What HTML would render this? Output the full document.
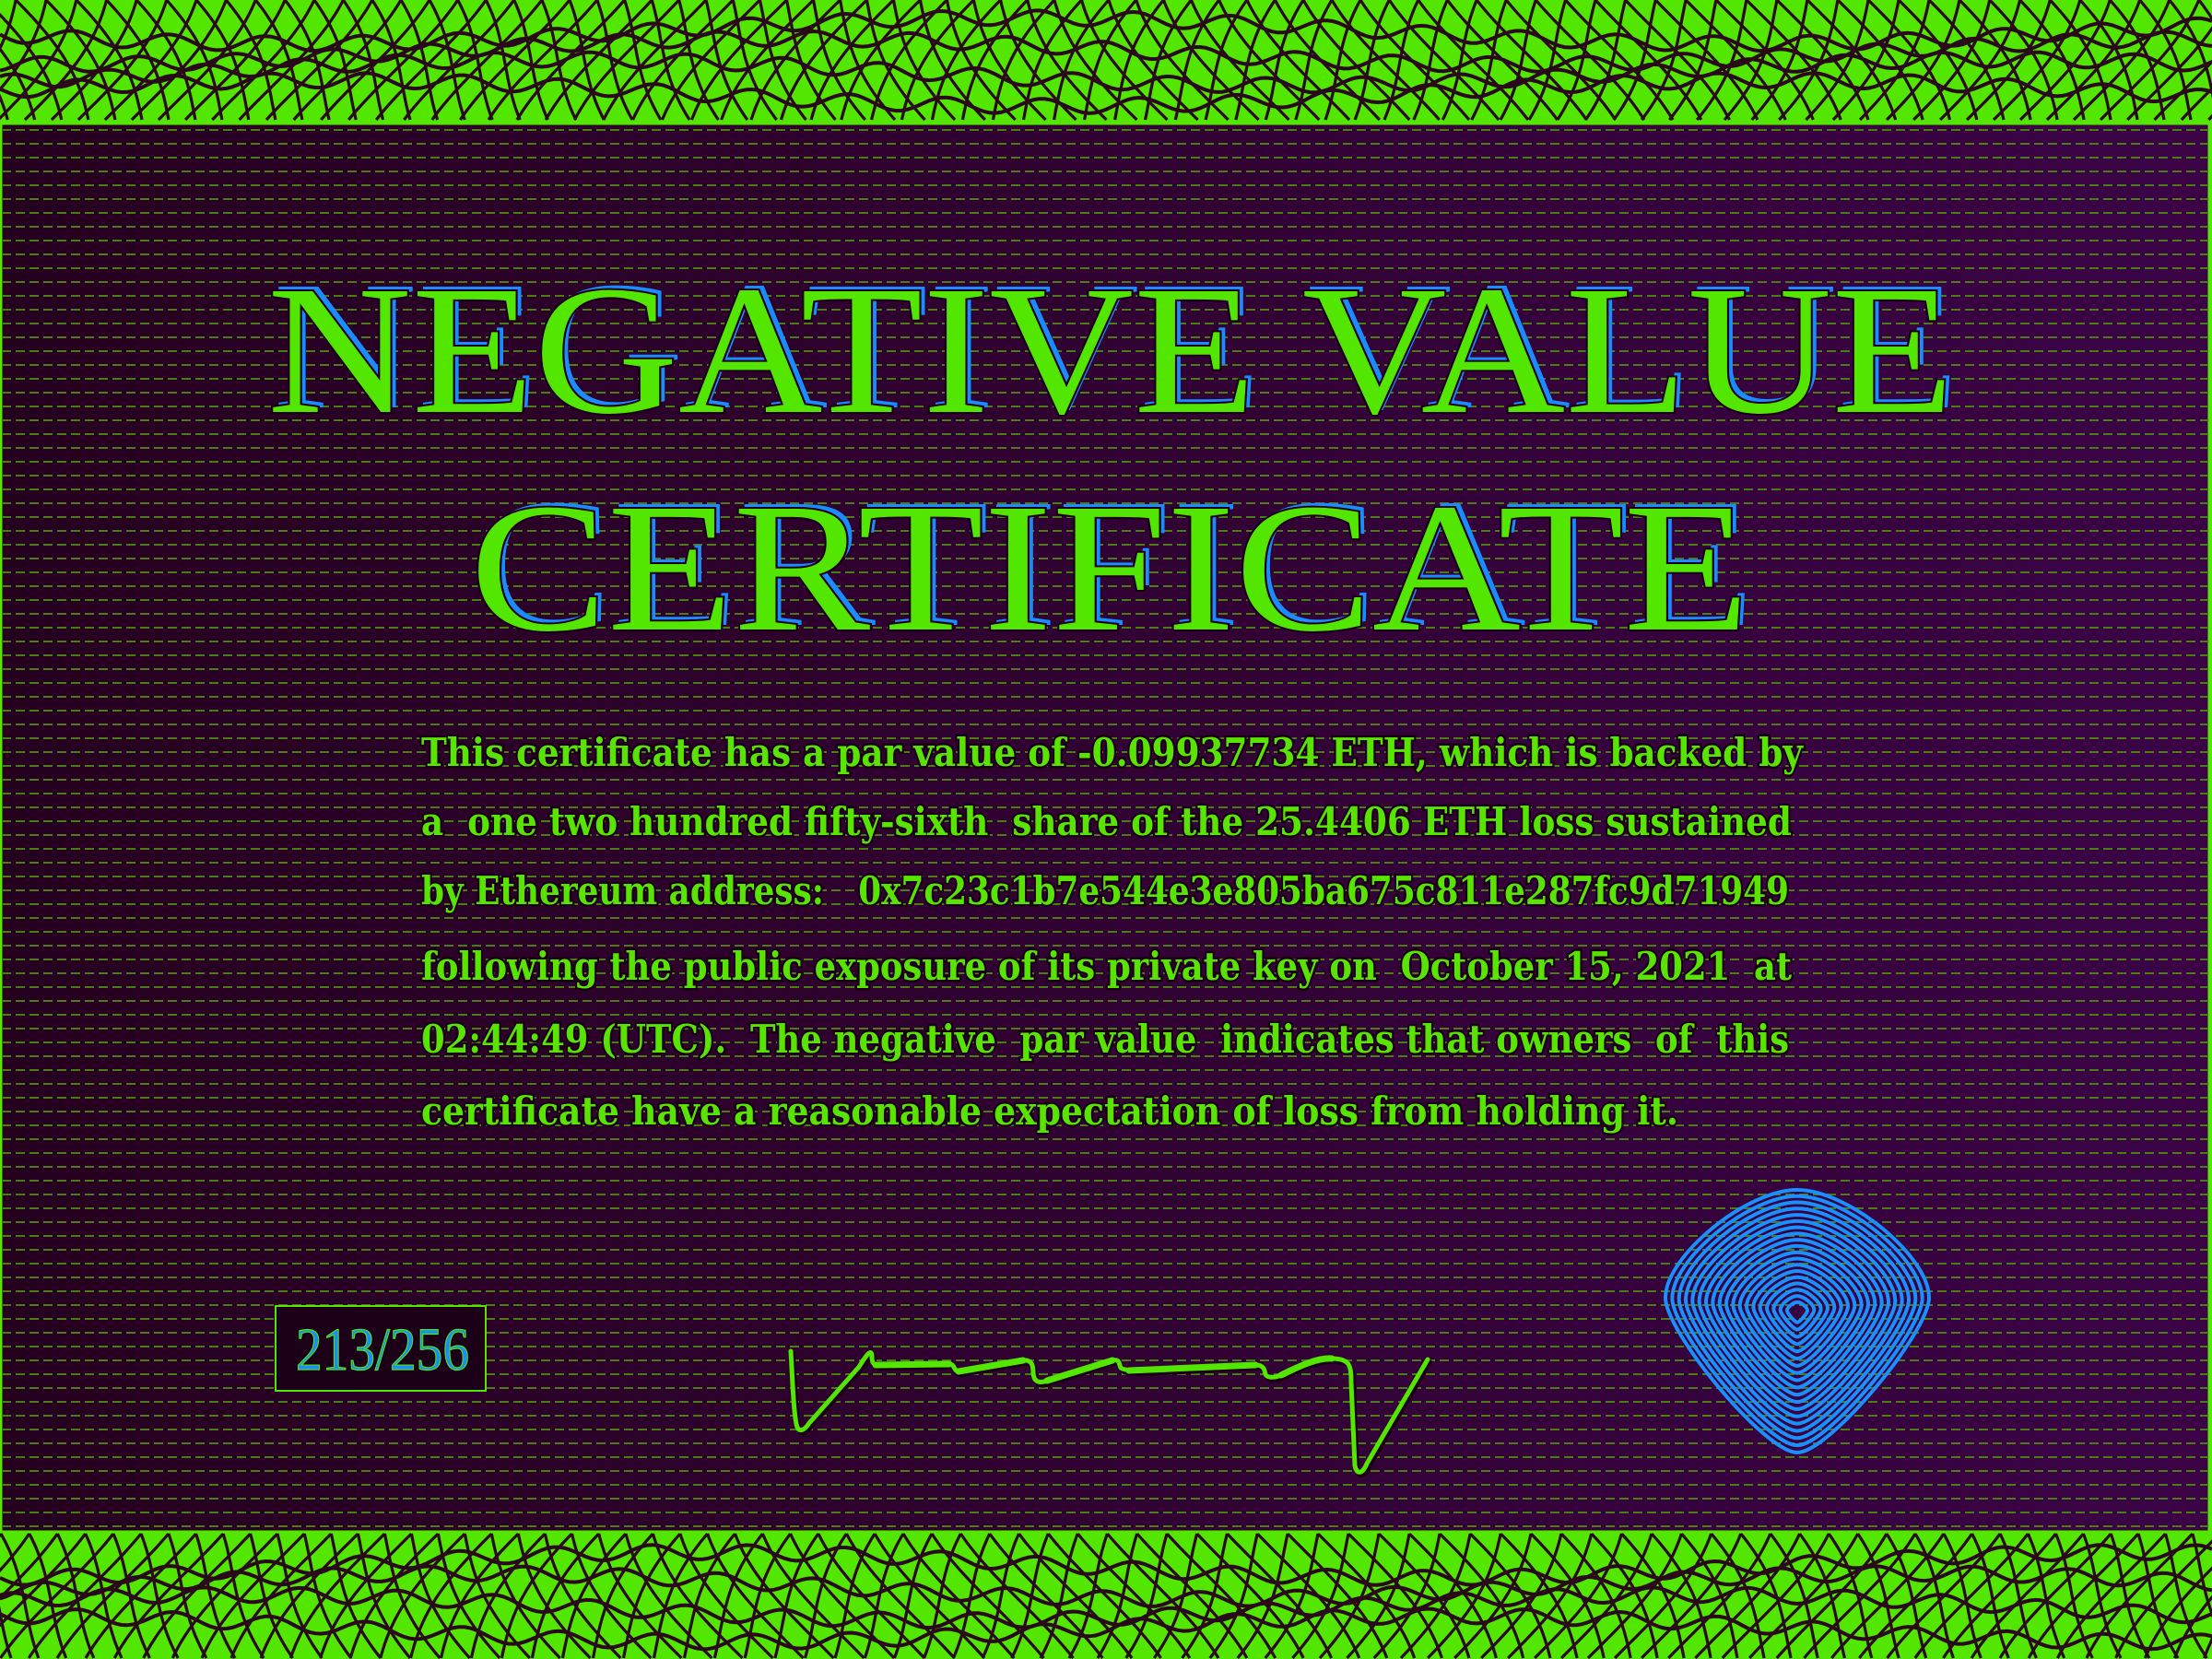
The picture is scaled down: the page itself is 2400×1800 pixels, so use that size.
<!DOCTYPE html>
<html><head><meta charset="utf-8"><style>
html,body{margin:0;padding:0;background:#52e600;}
svg{display:block}
</style></head><body>
<svg id="s" width="2400" height="1800" viewBox="0 0 2400 1800" xmlns="http://www.w3.org/2000/svg">
<defs>
<linearGradient id="bg" x1="0" y1="0" x2="1" y2="0">
<stop offset="0" stop-color="#26001f"/><stop offset="1" stop-color="#3b0346"/>
</linearGradient>
<pattern id="dash" x="2" y="140" width="15" height="15" patternUnits="userSpaceOnUse">
<rect x="0" y="0" width="10" height="2" fill="#4a7d14"/>
</pattern>
</defs>
<rect x="0" y="0" width="2400" height="1800" fill="#52e600"/>
<g id="gtop"></g>
<g id="gbot"></g>
<rect x="1" y="134" width="2396" height="1528" fill="url(#bg)" stroke="#52e600" stroke-width="3"/>
<rect x="3" y="138" width="2392" height="1522" fill="url(#dash)"/>

<g font-family="'Liberation Serif',serif" font-size="200" text-anchor="start">
<g fill="#1a8cff" transform="translate(6,-5)">
<text x="290" y="447" textLength="1830" lengthAdjust="spacingAndGlyphs">NEGATIVE VALUE</text>
<text x="510" y="683" textLength="1388" lengthAdjust="spacingAndGlyphs">CERTIFICATE</text>
</g>
<g fill="#52e600" stroke="#1a0012" stroke-width="4" paint-order="stroke">
<text x="290" y="447" textLength="1830" lengthAdjust="spacingAndGlyphs">NEGATIVE VALUE</text>
<text x="510" y="683" textLength="1388" lengthAdjust="spacingAndGlyphs">CERTIFICATE</text>
</g>
</g>

<g font-family="'DejaVu Serif','Liberation Serif',serif" font-weight="bold" font-size="42" fill="#58e400" stroke="#1a0012" stroke-width="5" paint-order="stroke">
<text x="457" y="831" textLength="1499" lengthAdjust="spacingAndGlyphs">This certificate has a par value of -0.09937734 ETH, which is backed by</text>
<text x="457" y="906" textLength="1487" lengthAdjust="spacingAndGlyphs" xml:space="preserve">a  one two hundred fifty-sixth  share of the 25.4406 ETH loss sustained</text>
<text x="457" y="981" textLength="1484" lengthAdjust="spacingAndGlyphs" xml:space="preserve">by Ethereum address:   0x7c23c1b7e544e3e805ba675c811e287fc9d71949</text>
<text x="457" y="1063" textLength="1487" lengthAdjust="spacingAndGlyphs" xml:space="preserve">following the public exposure of its private key on  October 15, 2021  at</text>
<text x="457" y="1142" textLength="1484" lengthAdjust="spacingAndGlyphs" xml:space="preserve">02:44:49 (UTC).  The negative  par value  indicates that owners  of  this</text>
<text x="457" y="1220" textLength="1364" lengthAdjust="spacingAndGlyphs">certificate have a reasonable expectation of loss from holding it.</text>
</g>

<rect x="299" y="1417" width="228" height="92" fill="#1c0018" stroke="#52e600" stroke-width="2"/>
<text x="321" y="1486" font-family="'Liberation Serif',serif" font-size="66" textLength="188" lengthAdjust="spacingAndGlyphs" fill="#1a8cff" stroke="#52e600" stroke-width="1.2">213/256</text>

<g fill="none" stroke-linecap="round" stroke-linejoin="round">
<path d="M858,1466 C860,1500 861,1530 864,1545 C866,1555 872,1553 878,1544 L932,1483 C940,1470 946,1462 946,1472 C946,1480 948,1481 956,1481 L1030,1480 C1036,1480 1035,1488 1040,1488 L1110,1476 C1120,1475 1121,1482 1121,1490 C1122,1500 1128,1501 1136,1498 L1207,1476 C1215,1474 1214,1480 1216,1484 C1218,1486 1225,1487 1240,1487 L1362,1481 C1372,1481 1372,1487 1373,1491 C1374,1494 1380,1496 1390,1492 C1410,1482 1430,1473 1445,1474 C1465,1474 1466,1482 1466,1500 L1470,1590 C1472,1600 1478,1600 1483,1588 L1549,1475" stroke="#1a0012" stroke-width="6" transform="translate(2,3)"/>
<path d="M858,1466 C860,1500 861,1530 864,1545 C866,1555 872,1553 878,1544 L932,1483 C940,1470 946,1462 946,1472 C946,1480 948,1481 956,1481 L1030,1480 C1036,1480 1035,1488 1040,1488 L1110,1476 C1120,1475 1121,1482 1121,1490 C1122,1500 1128,1501 1136,1498 L1207,1476 C1215,1474 1214,1480 1216,1484 C1218,1486 1225,1487 1240,1487 L1362,1481 C1372,1481 1372,1487 1373,1491 C1374,1494 1380,1496 1390,1492 C1410,1482 1430,1473 1445,1474 C1465,1474 1466,1482 1466,1500 L1470,1590 C1472,1600 1478,1600 1483,1588 L1549,1475" stroke="#52e600" stroke-width="5"/>
<path d="M950,1481 L1030,1480 M1040,1488 L1110,1476 M1136,1498 L1207,1476 M1225,1487 L1362,1481 M1390,1492 C1410,1482 1430,1473 1445,1474" stroke="#52e600" stroke-width="7"/>
</g>

<g id="fp" transform="translate(1950,1423)"></g>
</svg>
<script>
var NS="http://www.w3.org/2000/svg";
function P(g,d,w,c){var p=document.createElementNS(NS,"path");p.setAttribute("d",d);p.setAttribute("fill","none");p.setAttribute("stroke",c||"#2a0a18");p.setAttribute("stroke-width",w||3);g.appendChild(p);}
function band(g,y0,y1,seed){
  var h=y1-y0,i,x0,s,d,y,x;
  for(var k=0;k<2;k++){
    s=k?0.6:-0.6;
    for(x0=-300;x0<2700;x0+=31){
      d="";
      for(y=y0;y<=y1;y+=5){
        var t=(y-y0)/h;
        x=x0+s*(y-y0)+22*Math.sin(x0*0.003+seed+t*2.5);
        d+=(y==y0?"M":"L")+x.toFixed(1)+","+y;
      }
      P(g,d,3.2);
    }
  }
  for(i=0;i<4;i++){
    var base=y0+h*(0.25+i*0.17);
    d="";
    for(x=0;x<=2400;x+=6){
      y=base+14*Math.sin(x*0.004+i+seed)+8*Math.sin(x*0.06+i*2);
      d+=(x==0?"M":"L")+x+","+y.toFixed(1);
    }
    P(g,d,4);
  }
}
band(document.getElementById("gtop"),0,133,0.3);
band(document.getElementById("gbot"),1664,1800,1.7);
var fp=document.getElementById("fp");
for(var r=0;r<19;r++){
  var k=1-r/19.5;
  var p=document.createElementNS(NS,"path");
  p.setAttribute("d","M0,-132 C55,-132 143,-60 143,-15 C143,22 35,153 0,153 C-35,153 -143,22 -143,-15 C-143,-60 -55,-132 0,-132Z");
  p.setAttribute("transform","scale("+k+")");
  p.setAttribute("fill","none");p.setAttribute("stroke","#1a90ff");
  p.setAttribute("stroke-width",(4/k).toFixed(2));
  fp.appendChild(p);
}
</script>
</body></html>
